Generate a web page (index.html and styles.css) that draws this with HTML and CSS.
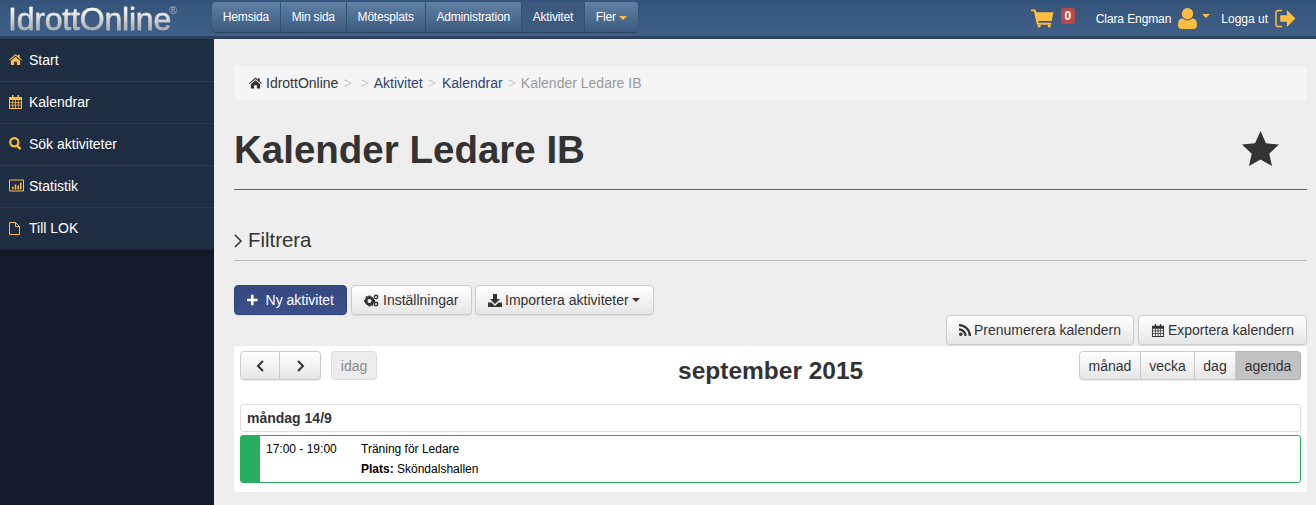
FILE: index.html
```html
<!DOCTYPE html>
<html lang="sv">
<head>
<meta charset="utf-8">
<title>Kalender Ledare IB</title>
<link rel="stylesheet" href="styles.css">
</head>
<body>
<header class="topbar">
  <a class="logo">IdrottOnline<sup class="reg">®</sup></a>
  <nav class="topnav">
    <a>Hemsida</a><a>Min sida</a><a>Mötesplats</a><a>Administration</a><a class="current">Aktivitet</a><a>Fler <i class="caret gold"></i></a>
  </nav>
  <div class="userbar">
    <svg class="i-cart" viewBox="0 0 24 20"><path d="M0 1h4.500l1 3H23.500l-2 9H7.500l.4 2H21v2H6.200L3 3H0z" fill="#fdbd40"/><circle cx="8.500" cy="18.500" r="1.500" fill="#fdbd40"/><circle cx="19" cy="18.500" r="1.500" fill="#fdbd40"/></svg>
    <span class="badge">0</span>
    <span class="uname">Clara Engman</span>
    <svg class="i-user" viewBox="0 0 20 22"><circle cx="10" cy="6" r="6" fill="#fdbd40"/><path d="M0 18c0-5 2-7 5-7 1.500 1.300 3 2 5 2s3.500-.7 5-2c3 0 5 2 5 7 0 2.500-1.500 4-4 4H4c-2.500 0-4-1.500-4-4z" fill="#fdbd40"/></svg>
    <i class="caret gold usercaret"></i>
    <span class="logout">Logga ut</span>
    <svg class="i-out" viewBox="0 0 22 20"><path d="M8 1.500H4A2.500 2.500 0 0 0 1.500 4v12A2.500 2.500 0 0 0 4 18.500h4" fill="none" stroke="#fdbd40" stroke-width="1.600"/><path d="M6 6.500h7V1l9 9-9 9v-5.500H6z" fill="#fdbd40"/></svg>
  </div>
</header>
<div class="shell">
  <aside class="sidebar">
    <a class="side-item"><svg class="si" viewBox="0 0 14 12"><path d="M7 0l2.500 2.200V1h2v3l2.500 2.200-.7.800L7 1.800.7 7 0 6.200z" fill="#fdbd40"/><path d="M2 7.300L7 3l5 4.300V12H8.500V8.500h-3V12H2z" fill="#fdbd40"/></svg>Start</a>
    <a class="side-item"><svg class="si tall" viewBox="0 0 13 14"><path d="M3 0h1.500v2H8.500V0H10v2h3v12H0V2h3z" fill="#fdbd40"/><path d="M1 5h2.400v2H1zM4.200 5h2v2h-2zM7 5h2v2H7zM9.700 5H12v2H9.700zM1 7.800h2.400v2H1zM4.200 7.800h2v2h-2zM7 7.800h2v2H7zM9.700 7.800H12v2H9.700zM1 10.600h2.400V13H1zM4.200 10.600h2V13h-2zM7 10.600h2V13H7zM9.700 10.600H12V13H9.700z" fill="#1f2d42"/></svg>Kalendrar</a>
    <a class="side-item"><svg class="si" viewBox="0 0 13 13"><circle cx="5.300" cy="5.300" r="4.100" fill="none" stroke="#fdbd40" stroke-width="2.200"/><path d="M8.200 8.800l3.400 3.400" stroke="#fdbd40" stroke-width="2.400"/></svg>Sök aktiviteter</a>
    <a class="side-item"><svg class="si wide" viewBox="0 0 15 12"><path d="M.5.500h14v11H.5z" fill="none" stroke="#fdbd40"/><path d="M3 7h1.500v3H3zM5.700 5H7.300v5H5.700zM8.500 6H10v4H8.500zM11 3h1.500v7H11z" fill="#fdbd40"/></svg>Statistik</a>
    <a class="side-item"><svg class="si narrow" viewBox="0 0 11 13"><path d="M.5.500h6l4 4v8H.5zM6.500.500v4h4" fill="none" stroke="#fdbd40"/></svg>Till LOK</a>
  </aside>
  <main class="content">
    <div class="crumbs">
      <svg class="crumb-home" viewBox="0 0 14 12"><path d="M7 0l2.500 2.200V1h2v3l2.500 2.200-.7.800L7 1.800.7 7 0 6.200z" fill="#333"/><path d="M2 7.300L7 3l5 4.300V12H8.500V8.500h-3V12H2z" fill="#333"/></svg>
      <span class="dark">IdrottOnline</span><span class="sep">&gt;</span><span class="sep gap">&gt;</span><a>Aktivitet</a><span class="sep wide-sep">&gt;</span><a>Kalendrar</a><span class="sep">&gt;</span><span class="muted">Kalender Ledare IB</span>
    </div>
    <div class="titlebar">
      <h1>Kalender Ledare IB</h1>
      <svg class="star" viewBox="0 0 38 36"><path d="M19 0l5.600 12.600 13.400 1.400-10 9.300L30.800 36 19 29.300 7.200 36 10 23.300 0 14l13.400-1.400z" fill="#333"/></svg>
    </div>
    <div class="filter">
      <svg class="chev" viewBox="0 0 9 14"><path d="M1 1l6 6-6 6" fill="none" stroke="#333" stroke-width="1.500"/></svg>
      <span>Filtrera</span>
    </div>
    <div class="actions">
      <button class="btn primary"><svg class="plus" viewBox="0 0 12 12"><path d="M4.500 0h3v4.500H12v3H7.500V12h-3V7.500H0v-3h4.500z" fill="#fff"/></svg>Ny aktivitet</button>
      <button class="btn settings"><svg class="bi cogs" viewBox="0 0 15 13"><circle cx="5.500" cy="7" r="3.400" fill="none" stroke="#333" stroke-width="2.800"/><path d="M4.500 1.500h2v2h-2zM4.500 10.500h2v2h-2zM0 6h2v2H0zM9 6h2v2H9zM1.500 2.500l1.500-.5 1 1.500-1.500 1zM8 10l1.500 1-1 1-1.500-1z" fill="#333"/><circle cx="12" cy="3" r="1.700" fill="none" stroke="#333" stroke-width="1.400"/><circle cx="12" cy="10" r="1.700" fill="none" stroke="#333" stroke-width="1.400"/></svg>Inställningar</button>
      <button class="btn import"><svg class="bi" viewBox="0 0 14 13"><path d="M5 0h4v5h3L7 10 2 5h3z" fill="#333"/><path d="M0 8.500h3.500L7 12l3.500-3.500H14V13H0z" fill="#333"/></svg>Importera aktiviteter <i class="caret dark-caret"></i></button>
    </div>
    <div class="exports">
      <button class="btn subscribe"><svg class="bi rss" viewBox="0 0 11 11"><circle cx="1.600" cy="9.400" r="1.600" fill="#333"/><path d="M0 4a7 7 0 0 1 7 7H5A5 5 0 0 0 0 6zM0 0a11 11 0 0 1 11 11H9A9 9 0 0 0 0 2z" fill="#333"/></svg>Prenumerera kalendern</button>
      <button class="btn"><svg class="bi" viewBox="0 0 13 14"><path d="M3 0h1.500v2H8.500V0H10v2h3v12H0V2h3z" fill="#333"/><path d="M1 5h2.400v2H1zM4.200 5h2v2h-2zM7 5h2v2H7zM9.700 5H12v2H9.700zM1 7.800h2.400v2H1zM4.200 7.800h2v2h-2zM7 7.800h2v2H7zM9.700 7.800H12v2H9.700zM1 10.600h2.400V13H1zM4.200 10.600h2V13h-2zM7 10.600h2V13H7zM9.700 10.600H12V13H9.700z" fill="#f0f0f0"/></svg>Exportera kalendern</button>
    </div>
    <section class="calendar">
      <div class="cal-toolbar">
        <div class="cal-left">
          <div class="group">
            <button class="seg arrow"><svg viewBox="0 0 9 12"><path d="M7 1L2 6l5 5" fill="none" stroke="#333" stroke-width="2"/></svg></button>
            <button class="seg arrow"><svg viewBox="0 0 9 12"><path d="M2 1l5 5-5 5" fill="none" stroke="#333" stroke-width="2"/></svg></button>
          </div>
          <button class="today">idag</button>
        </div>
        <h2>september 2015</h2>
        <div class="group views">
          <button class="seg v-month">månad</button><button class="seg v-week">vecka</button><button class="seg v-day">dag</button><button class="seg v-agenda active">agenda</button>
        </div>
      </div>
      <div class="day">måndag 14/9</div>
      <div class="event">
        <div class="ev-color"></div>
        <div class="ev-time">17:00 - 19:00</div>
        <div class="ev-body">
          <div>Träning för Ledare</div>
          <div class="ev-place"><b>Plats:</b> Sköndalshallen</div>
        </div>
      </div>
    </section>
  </main>
</div>
</body>
</html>
```

FILE: styles.css
```css
* { box-sizing: border-box; }
html, body { margin: 0; height: 505px; overflow: hidden; }
body { font-family: "Liberation Sans", Arial, sans-serif; font-size: 14px; color: #333; background: #eee; }
button { font-family: inherit; }

.topbar { height: 39px; display: flex; align-items: flex-start; background: #3a5a82; background-image: linear-gradient(#35547c, #3f6088); border-bottom: 3px solid #2d4260; }
.logo { width: 212px; height: 36px; padding: 0 0 0 8px; font-size: 32px; line-height: 38px; letter-spacing: -0.2px; background: linear-gradient(#fff 25%, #a5a5a5 85%); -webkit-background-clip: text; background-clip: text; color: transparent; -webkit-text-stroke: 0.4px rgba(225,225,225,.75); position: relative; }
.reg { position: absolute; left: 169px; top: 5px; font-size: 11px; line-height: 11px; letter-spacing: 0; color: #a9b5c4; -webkit-text-stroke: 0; }

.topnav { display: flex; height: 30px; margin-top: 2px; background: linear-gradient(#5f7fa3, #3c5b80); border-radius: 4px; box-shadow: 0 1px 1px #2b4060; }
.topnav a { padding: 0 10.85px; font-size: 12px; line-height: 30px; color: #fff; border-right: 1px solid #34506f; letter-spacing: -0.18px; }
.topnav a:last-child { border-right: 0; }
.topnav a.current { background: #3d5a7e; }
.caret { display: inline-block; width: 0; height: 0; border: 4px solid transparent; border-top-color: currentColor; border-bottom: 0; vertical-align: middle; }
.caret.gold { color: #fdbd40; }
.dark-caret { color: #333; }

.userbar { margin-left: auto; display: flex; align-items: center; height: 37px; padding-right: 20px; color: #fff; font-size: 12px; }
.i-cart { width: 23px; height: 20px; margin-right: 7px; margin-top: -1px; }
.badge { width: 14px; height: 16px; margin-right: 21px; margin-top: -5px; border-radius: 3px; background: #b94a48; color: #fff; font-size: 12px; font-weight: bold; line-height: 16px; text-align: center; }
.uname { letter-spacing: -0.1px; }
.i-user { width: 19px; height: 21px; margin-left: 7px; margin-top: -1px; }
.usercaret { margin: -5px 0 0 5px; }
.logout { margin-left: 11px; }
.i-out { width: 22px; height: 19px; margin-left: 6px; margin-top: -1px; }

.shell { display: flex; height: 466px; }
.sidebar { width: 214px; background: #111b2a; flex: none; }
.side-item { display: flex; align-items: center; height: 42px; padding: 0 0 2px 9px; background: #1f2d42; border-top: 1px solid #2a3a50; color: #fff; font-size: 14px; }
.side-item:first-child { border-top-color: #1b2839; }
.side-item:last-child { height: 43px; border-bottom: 1px solid #18243a; padding-bottom: 1px; }
.si { width: 13px; height: 13px; margin-right: 7px; flex: none; }
.si.tall { height: 14px; }
.si.wide { width: 15px; margin-right: 5px; }
.si.narrow { width: 11px; margin-right: 9px; }

.content { flex: 1; padding: 27px 9px 0 20px; min-width: 0; }
.crumbs { display: flex; align-items: center; height: 34px; padding-left: 15px; background: #f5f5f5; border-radius: 4px; font-size: 14px; }
.crumb-home { width: 13px; height: 12px; margin-right: 4px; }
.crumbs a { color: #2d4373; }
.sep { color: #ccc; margin: 0 5px; }
.sep.gap { margin-left: 4px; }
.sep.wide-sep { margin-right: 6px; }
.dark { color: #333; }
.muted { color: #999; }

.titlebar { display: flex; justify-content: space-between; align-items: center; height: 90px; border-bottom: 1px solid #666; padding-right: 28px; }
h1 { margin: 11px 0 0; font-size: 38.5px; font-weight: bold; line-height: 42px; color: #333; }
.star { width: 37px; height: 35px; margin-top: 8px; }

.filter { display: flex; align-items: center; height: 71px; padding-top: 31px; border-bottom: 1px solid #bbb; font-size: 20.4px; color: #333; }
.chev { width: 9px; height: 14px; margin-right: 5px; }

.actions { display: flex; gap: 4px; margin-top: 24px; }
.exports { display: flex; justify-content: flex-end; gap: 4px; }
.btn { height: 30px; padding: 0 12px; border: 1px solid #ccc; border-radius: 4px; background: linear-gradient(#fff, #e6e6e6); color: #333; font-size: 14px; display: inline-flex; align-items: center; white-space: nowrap; box-shadow: 0 1px 1px rgba(0,0,0,.08); }
.btn .caret { margin-left: 3px; }
.primary { width: 113px; background: linear-gradient(#34497f, #3c4f8c); border-color: #2f4273; color: #fff; }
.plus { width: 12px; height: 12px; margin-right: 8px; }
.bi { width: 14px; height: 13px; margin-right: 3px; flex: none; }
.cogs { width: 15px; margin-right: 4px; }
.rss { width: 12px; height: 12px; }
.settings { width: 121px; }
.import { width: 179px; margin-left: -1px; }
.subscribe { width: 188px; }

.calendar { margin-top: 1px; background: #fff; height: 146px; padding: 5px 6px; border-radius: 2px; }
.cal-toolbar { display: flex; justify-content: space-between; align-items: flex-start; height: 53px; position: relative; }
.cal-left { display: flex; gap: 10px; }
.group { display: flex; }
.seg { height: 29px; padding: 0; border: 1px solid #ccc; border-left-width: 0; background: linear-gradient(#fff, #e6e6e6); color: #333; font-size: 14px; box-shadow: 0 1px 1px rgba(0,0,0,.08); }
.seg:first-child { border-left-width: 1px; border-radius: 4px 0 0 4px; }
.seg:last-child { border-radius: 0 4px 4px 0; }
.seg.arrow { width: 40px; display: flex; align-items: center; justify-content: center; }
.seg.arrow + .seg.arrow { width: 41px; }
.seg.arrow svg { width: 9px; height: 12px; }
.v-month { width: 62px; }
.v-week { width: 54px; }
.v-day { width: 41px; }
.v-agenda { width: 65px; }
.seg.active { background: #c2c2c2; border-color: #b5b5b5; }
.today { height: 29px; width: 46px; padding: 0; border: 1px solid #ddd; border-radius: 4px; background: #ececec; color: #8a8a8a; font-size: 14px; }
h2 { margin: 4px 0 0; font-size: 24.5px; line-height: 32px; font-weight: bold; color: #333; position: absolute; left: 438px; }
.day { height: 28px; border: 1px solid #ddd; border-radius: 3px; padding-left: 6px; font-size: 14px; font-weight: bold; line-height: 26px; color: #333; }
.event { display: flex; height: 48px; margin-top: 3px; border: 1px solid #27ae60; border-radius: 3px; font-size: 12px; color: #000; }
.ev-color { width: 19px; background: #27ae60; flex: none; }
.ev-time { width: 101px; padding: 5px 0 0 6px; flex: none; line-height: 16px; }
.ev-body { padding-top: 5px; line-height: 16px; }
.ev-place { margin-top: 4px; }
```
